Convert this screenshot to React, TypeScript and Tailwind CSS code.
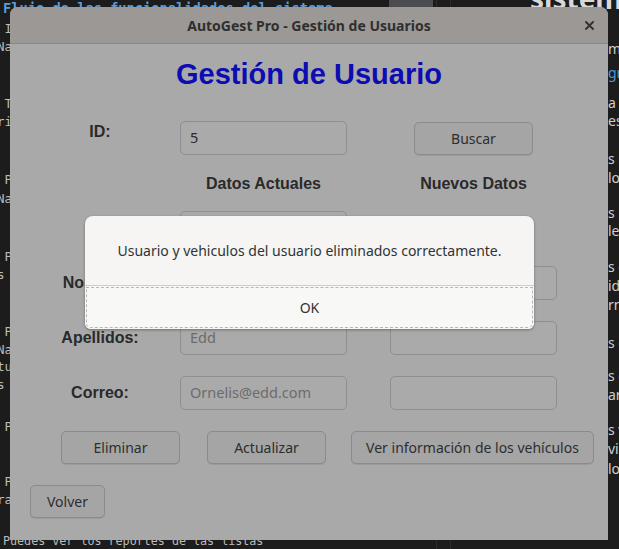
import React from "react";

const mono = { fontFamily: '"DejaVu Sans Mono", "Liberation Mono", monospace' };
const gtk = { fontFamily: '"Noto Sans", "Open Sans", sans-serif' };
const swing = { fontFamily: '"Liberation Sans", Arial, sans-serif' };

// text of the editor behind the window, only the edges show
const leftBits: [number, string][] = [
  [20, " I"], [38, "Na"], [95, " T"], [113, "ri"], [171, " P"], [190, "Na"],
  [248, " P"], [266, "s"], [323, " P"], [341, "Na"], [358, "tu"], [376, "s"],
  [418, " P"], [473, " P"], [491, "ra"],
];
const rightBits: [number, string, boolean][] = [
  [38, "me", false], [62, "gr", true], [92, "a", false], [110, "es", false],
  [148, "s r", false], [167, "lo", false], [202, "s i", false], [220, "le", false],
  [256, "s g", false], [275, "id", false], [294, "rm", false], [332, "s g", false],
  [365, "s e", false], [384, "ar", false], [419, "s v", false], [438, "viz", false],
  [458, "lo", false],
];

function Field({ value, muted }: { value?: string; muted?: boolean }) {
  return (
    <div
      className={`h-[34px] w-[167px] shrink-0 rounded-[5px] border border-[#8f8f8f] bg-[#aaaaaa] px-[9px] flex items-center text-[14.5px] ${
        muted ? "text-[#6c6c6c]" : "text-[#2a2a2a]"
      }`}
      style={gtk}
    >
      {value}
    </div>
  );
}

function Btn({ label, w }: { label: string; w: string }) {
  return (
    <div
      className={`${w} h-[33px] shrink-0 rounded-[5px] border border-[#8b8b8b] bg-[#a5a5a5] shadow-[0_1px_0_rgba(0,0,0,0.08)] flex items-center justify-center text-[14px] text-[#2e2e2e]`}
      style={gtk}
    >
      {label}
    </div>
  );
}

function Label({ text, lift }: { text: string; lift?: boolean }) {
  return (
    <div
      className={`w-[170px] shrink-0 pl-[10px] text-center text-[16px] font-bold text-[#2a2a2a] ${lift ? "mb-[11px]" : ""}`}
      style={swing}
    >
      {text}
    </div>
  );
}

export default function App() {
  return (
    <div className="relative w-[619px] h-[549px] overflow-hidden bg-[#1c1c1c]">
      {/* desktop behind */}
      <div className="absolute left-[3px] top-[-2px] text-[13.7px] font-bold text-[#5a9bd8] whitespace-pre" style={mono}>
        Flujo de las funcionalidades del sistema
      </div>
      <div className="absolute left-[389px] top-0 w-[44px] h-[7px] bg-[#4a4c50]" />
      <div className="absolute left-[436px] top-0 w-px h-[549px] bg-[#2c2c2c]" />
      <div className="absolute left-[450px] top-0 w-px h-[549px] bg-[#2c2c2c]" />
      <div className="absolute left-[530px] top-[-23px] text-[28px] font-bold text-[#d8d8d8]" style={gtk}>
        sistema
      </div>
      {leftBits.map(([y, t], i) => (
        <div key={i} className="absolute left-[-3px] text-[12.5px] text-[#bdbdbd] whitespace-pre" style={{ ...mono, top: y }}>
          {t}
        </div>
      ))}
      {rightBits.map(([y, t, blue], i) => (
        <div
          key={i}
          className={`absolute left-[608px] text-[14px] whitespace-pre ${blue ? "text-[#4f98dc]" : "text-[#cfcfcf]"}`}
          style={{ ...gtk, top: y }}
        >
          {t}
        </div>
      ))}
      <div className="absolute left-[3px] top-[533px] text-[11.7px] text-[#bdbdbd] whitespace-pre" style={mono}>
        Puedes ver los reportes de las listas
      </div>

      {/* main window (dimmed behind the modal) */}
      <div className="absolute left-[10px] top-[7px] w-[598px] h-[533px] rounded-t-[8px] bg-[#a9a9a9] overflow-hidden flex flex-col">
        <div className="relative h-[37px] shrink-0 bg-[#9b9895] border-b border-[#898684] flex items-center justify-center">
          <span className="text-[14px] font-bold text-[#2f2f2f]" style={gtk}>
            AutoGest Pro - Gestión de Usuarios
          </span>
          <svg className="absolute right-[14px] top-[14px]" width="9" height="9" viewBox="0 0 9 9">
            <path d="M1 1 L8 8 M8 1 L1 8" stroke="#2f2f2f" strokeWidth="1.8" strokeLinecap="round" />
          </svg>
        </div>

        <div className="flex flex-col pt-[13px]">
          <h1 className="text-center text-[29px] leading-[34px] font-bold text-[#0c0cb2]" style={swing}>
            Gestión de Usuario
          </h1>

          <div className="mt-[29px] flex items-center">
            <Label text="ID:" lift />
            <Field value="5" />
            <div className="ml-[43px] w-[167px] flex justify-center pt-[2px]">
              <Btn label="Buscar" w="w-[119px]" />
            </div>
          </div>

          <div className="mt-[19px] h-[20px] flex items-center text-[16px] font-bold text-[#2a2a2a]" style={swing}>
            <div className="ml-[170px] w-[167px] text-center">Datos Actuales</div>
            <div className="ml-[43px] w-[167px] text-center">Nuevos Datos</div>
          </div>

          <div className="mt-[17px] flex items-center">
            <div className="w-[170px] shrink-0" />
            <Field />
          </div>

          <div className="mt-[21px] flex items-center">
            <Label text="Nombres:" />
            <Field value="Ornelis" muted />
            <div className="ml-[43px]">
              <Field />
            </div>
          </div>

          <div className="mt-[21px] flex items-center">
            <Label text="Apellidos:" />
            <Field value="Edd" muted />
            <div className="ml-[43px]">
              <Field />
            </div>
          </div>

          <div className="mt-[21px] flex items-center">
            <Label text="Correo:" />
            <Field value="Ornelis@edd.com" muted />
            <div className="ml-[43px]">
              <Field />
            </div>
          </div>

          <div className="mt-[21px] flex">
            <div className="ml-[51px]">
              <Btn label="Eliminar" w="w-[119px]" />
            </div>
            <div className="ml-[27px]">
              <Btn label="Actualizar" w="w-[119px]" />
            </div>
            <div className="ml-[25px]">
              <Btn label="Ver información de los vehículos" w="w-[243px]" />
            </div>
          </div>

          <div className="mt-[21px] ml-[20px]">
            <Btn label="Volver" w="w-[75px]" />
          </div>
        </div>
      </div>

      {/* message dialog */}
      <div className="absolute left-[85px] top-[216px] w-[449px] h-[113px] rounded-t-[8px] rounded-b-[6px] bg-[#f6f5f4] shadow-[0_1px_3px_rgba(0,0,0,0.35)] flex flex-col overflow-hidden">
        <div className="h-[69px] flex items-center justify-center text-[14px] text-[#2e3436]" style={gtk}>
          Usuario y vehiculos del usuario eliminados correctamente.
        </div>
        <div className="h-px bg-[#cfcdca]" />
        <div className="flex-1 p-[1px] bg-[#f8f8f7]">
          <div className="h-full rounded-b-[5px] border border-dashed border-[#b8b6b3] flex items-center justify-center text-[14px] text-[#2e3436]" style={gtk}>
            OK
          </div>
        </div>
      </div>
    </div>
  );
}
